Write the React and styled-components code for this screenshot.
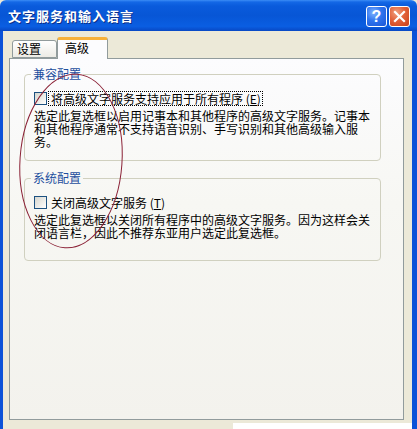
import React from "react";
import styled, { createGlobalStyle } from "styled-components";

const Global = createGlobalStyle`
  html, body { margin: 0; padding: 0; background: #ece9d8; }
  body { width: 417px; height: 429px; overflow: hidden; }
  * { box-sizing: border-box; }
`;

const cjk = `"SimSun", "Noto Sans CJK SC", "Liberation Sans", sans-serif`;

const Window = styled.div`
  position: relative;
  width: 417px;
  height: 429px;
  display: flex;
  flex-direction: column;
  font-family: ${cjk};
  font-size: 12px;
  color: #000;
  background: #ece9d8;
`;

const TitleBar = styled.div`
  height: 31px;
  flex: none;
  display: flex;
  align-items: center;
  justify-content: space-between;
  padding: 0 7px 2px 8px;
  background: linear-gradient(
    to bottom,
    #3b8df5 0px,
    #1468e6 2px,
    #0a5bdc 6px,
    #0756d6 50%,
    #0a5ee2 85%,
    #0848c4 100%
  );
  border-radius: 6px 6px 0 0;
`;

const Title = styled.span`
  color: #fff;
  font-weight: bold;
  font-size: 13px;
  letter-spacing: 1px;
  text-shadow: 1px 1px 0 #0a2f88;
  padding-top: 2px;
`;

const Buttons = styled.div`
  display: flex;
  gap: 2px;
  padding-top: 4px;
`;

const CapButton = styled.div`
  width: 21px;
  height: 21px;
  border: 1px solid #fff;
  border-radius: 3px;
  display: flex;
  align-items: center;
  justify-content: center;
  color: #fff;
  font-family: "Liberation Sans", sans-serif;
  font-weight: bold;
  font-size: 16px;
  background: ${(p) =>
    p.$kind === "close"
      ? "radial-gradient(circle at 35% 30%, #f0a080 0%, #e2623a 45%, #c9401a 100%)"
      : "radial-gradient(circle at 35% 30%, #7fb2ff 0%, #2f74ee 45%, #1a55d6 100%)"};
`;

const Frame = styled.div`
  flex: 1;
  display: flex;
  flex-direction: column;
  border-left: 3px solid #0c52d8;
  border-right: 5px solid #0c52d8;
  padding: 6px 8px 9px 6px;
  min-height: 0;
`;

const TabRow = styled.div`
  display: flex;
  align-items: flex-end;
  padding-left: 3px;
  height: 21px;
  flex: none;
  position: relative;
  z-index: 2;
`;

const Tab = styled.div`
  width: ${(p) => (p.$active ? 51 : 45)}px;
  height: ${(p) => (p.$active ? 22 : 18)}px;
  border: 1px solid #919b9c;
  border-bottom: ${(p) => (p.$active ? "none" : "1px solid #919b9c")};
  border-top: ${(p) => (p.$active ? "3px solid #f7b13a" : "1px solid #919b9c")};
  border-radius: 3px 3px 0 0;
  background: ${(p) =>
    p.$active ? "#fcfcfe" : "linear-gradient(to bottom, #ffffff, #ecebe5)"};
  display: flex;
  align-items: ${(p) => (p.$active ? "flex-start" : "center")};
  padding-left: ${(p) => (p.$active ? 7 : 4)}px;
  padding-top: ${(p) => (p.$active ? 1 : 0)}px;
  margin-bottom: ${(p) => (p.$active ? -1 : 0)}px;
  line-height: 14px;
`;

const Panel = styled.div`
  flex: 1;
  border: 1px solid #919b9c;
  background: linear-gradient(to bottom, #fcfcfe 0%, #f7f7f3 40%, #f3f2ed 100%);
  padding: 8px 22px 0 14px;
  display: flex;
  flex-direction: column;
  gap: 10px;
`;

const Group = styled.fieldset`
  margin: 0;
  border: 1px solid #d0d0bf;
  border-radius: 4px;
  padding: 10px 8px ${(p) => p.$pb}px 9px;
  min-width: 0;
`;

const Legend = styled.legend`
  color: #1e4f9e;
  padding: 0 2px;
  margin-left: -3px;
  line-height: 14px;
  font-size: 12px;
`;

const CheckRow = styled.div`
  display: flex;
  align-items: center;
  gap: 1px;
  height: 15px;
  margin-bottom: 3px;
`;

const Box = styled.span`
  width: 13px;
  height: 13px;
  flex: none;
  border: 1px solid #1c5180;
  background: linear-gradient(135deg, #d6d6cf 0%, #eeeeea 60%, #ffffff 100%);
`;

const CheckLabel = styled.span`
  line-height: 13px;
  padding: 0 1px 0 2px;
  border: 1px dotted ${(p) => (p.$focus ? "#000" : "transparent")};
  white-space: nowrap;
`;

const Desc = styled.div`
  line-height: 13px;
  white-space: nowrap;
`;

const Ellipse = styled.svg`
  position: absolute;
  left: 0;
  top: 0;
  pointer-events: none;
  z-index: 5;
`;

const Strip = styled.div`
  position: absolute;
  left: 233px;
  top: 423px;
  width: 179px;
  height: 6px;
  background: #ffffff;
`;

export default function App() {
  return (
    <>
      <Global />
      <Window>
        <TitleBar>
          <Title>文字服务和输入语言</Title>
          <Buttons>
            <CapButton $kind="help">?</CapButton>
            <CapButton $kind="close">
              <svg width="13" height="13" viewBox="0 0 13 13">
                <path d="M2 2 L11 11 M11 2 L2 11" stroke="#fff" strokeWidth="2.2" strokeLinecap="square" />
              </svg>
            </CapButton>
          </Buttons>
        </TitleBar>
        <Frame>
          <TabRow>
            <Tab>设置</Tab>
            <Tab $active>高级</Tab>
          </TabRow>
          <Panel>
            <Group $pb={12}>
              <Legend>兼容配置</Legend>
              <CheckRow>
                <Box />
                <CheckLabel $focus>
                  将高级文字服务支持应用于所有程序 (<u>E</u>)
                </CheckLabel>
              </CheckRow>
              <Desc>
                选定此复选框以启用记事本和其他程序的高级文字服务。记事本
                <br />
                和其他程序通常不支持语音识别、手写识别和其他高级输入服
                <br />
                务。
              </Desc>
            </Group>
            <Group $pb={21}>
              <Legend>系统配置</Legend>
              <CheckRow>
                <Box />
                <CheckLabel>
                  关闭高级文字服务 (<u>T</u>)
                </CheckLabel>
              </CheckRow>
              <Desc>
                选定此复选框以关闭所有程序中的高级文字服务。因为这样会关
                <br />
                闭语言栏，因此不推荐东亚用户选定此复选框。
              </Desc>
            </Group>
          </Panel>
        </Frame>
        <Ellipse width="417" height="429" viewBox="0 0 417 429">
          <ellipse
            cx="71"
            cy="161"
            rx="51"
            ry="87"
            transform="rotate(4 71 161)"
            fill="none"
            stroke="#8a2035"
            strokeWidth="1"
          />
        </Ellipse>
        <Strip />
      </Window>
    </>
  );
}
